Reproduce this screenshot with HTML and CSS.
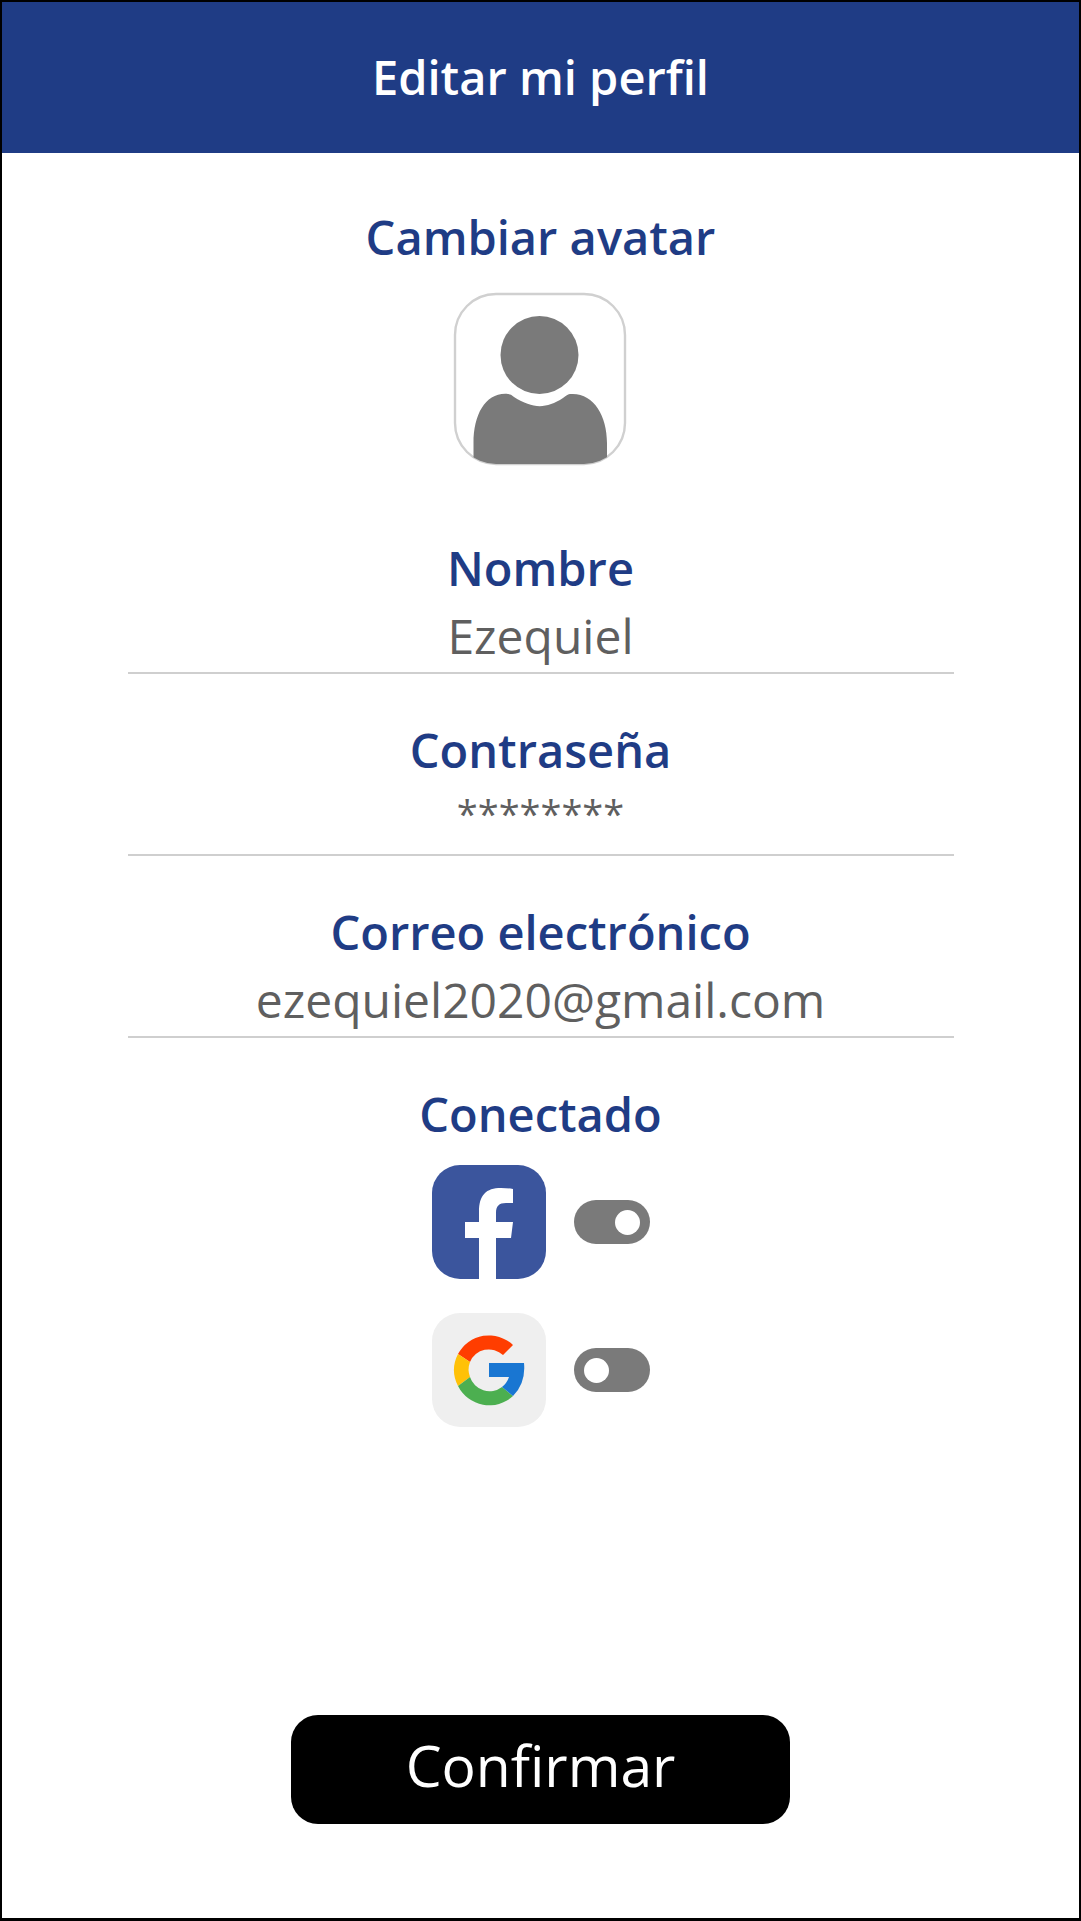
FILE: index.html
```html
<!DOCTYPE html>
<html lang="es">
<head>
<meta charset="utf-8">
<meta name="viewport" content="width=device-width, initial-scale=1">
<title>Editar mi perfil</title>
<link rel="stylesheet" href="styles.css">
</head>
<body>
<div class="screen">
  <header class="topbar">
    <h1 class="topbar-title">Editar mi perfil</h1>
  </header>
  <form class="profile">
    <section class="avatar-section">
      <h2 class="heading" id="avatar-heading">Cambiar avatar</h2>
      <button class="avatar" type="button" aria-labelledby="avatar-heading">
        <svg class="avatar-art" viewBox="0 0 172 172" aria-hidden="true">
          <defs><clipPath id="frame"><rect width="172" height="171" rx="42"/></clipPath></defs>
          <rect x="1" y="1" width="170" height="170" rx="41" fill="#fff" stroke="#d0d0d0" stroke-width="2.4"/>
          <g fill="#7a7a7a" clip-path="url(#frame)">
            <circle cx="85.500" cy="62" r="39"/>
            <path d="M19.500 172V150C19.500 121 32 99 54 101Q57 101 60 104C79 116 92 116 109 105Q114 101 116 101C139 99 153 122 153 150V172Z"/>
          </g>
        </svg>
      </button>
    </section>
    <div class="field">
      <label class="heading" for="name">Nombre</label>
      <input class="field-input" id="name" type="text" value="Ezequiel">
    </div>
    <div class="field">
      <label class="heading" for="password">Contraseña</label>
      <input class="field-input field-masked" id="password" type="text" value="********">
    </div>
    <div class="field">
      <label class="heading" for="email">Correo electrónico</label>
      <input class="field-input" id="email" type="email" value="ezequiel2020@gmail.com">
    </div>
    <section class="accounts">
      <h2 class="heading">Conectado</h2>
      <label class="account">
        <svg class="account-logo" viewBox="0 0 114 114" role="img" aria-label="Facebook">
          <rect width="114" height="114" rx="28" fill="#3b559d"/>
          <path fill="#fff" d="M47 114V73H33V57H47V47C47 30 54 23 69 23Q76 23 81 24V38H74C67 38 64 41 64 48V57H81L79 73H64V114Z"/>
        </svg>
        <input class="toggle" type="checkbox" role="switch" checked>
      </label>
      <label class="account">
        <svg class="account-logo" viewBox="0 0 114 114" role="img" aria-label="Google">
          <rect width="114" height="114" rx="28" fill="#efefef"/>
          <path fill="#ff3d00" d="M26 41A35 35 0 0 1 81 32L71 42A20.500 20.500 0 0 0 38 49Z"/>
          <path fill="#ffc107" d="M26 41A35 35 0 0 0 26 73L38 64A21 21 0 0 1 38 49Z"/>
          <path fill="#4caf50" d="M26 73A35 35 0 0 0 81 83L70 74A20.500 20.500 0 0 1 38 64Z"/>
          <path fill="#1976d2" d="M57 50H92Q94 70 81 83L70 74Q75 70 77 64H57Z"/>
        </svg>
        <input class="toggle" type="checkbox" role="switch">
      </label>
    </section>
    <button class="confirm" type="submit">Confirmar</button>
  </form>
</div>
</body>
</html>
```
FILE: styles.css
```css
* {
  box-sizing: border-box;
}

body {
  margin: 0;
  background: #fff;
  font-family: "Open Sans", "Noto Sans", sans-serif;
  font-size: 48px;
  font-variant-ligatures: none;
  line-height: 70px;
}

.screen {
  display: flex;
  flex-direction: column;
  min-height: 100vh;
  border: 2px solid #000;
  border-bottom-width: 3px;
}

.topbar {
  padding: 40px 24px 41px;
  background: #1f3c85;
  color: #fff;
  text-align: center;
}

.topbar-title,
.heading {
  display: block;
  margin: 0;
  font-size: 47px;
  font-weight: 600;
  line-height: 70px;
}

.heading {
  color: #1f3c85;
}

.profile {
  display: flex;
  flex: 1;
  flex-direction: column;
  align-items: center;
  gap: 41px;
  padding: 49px 24px 94px;
  text-align: center;
}

.avatar-section {
  display: flex;
  flex-direction: column;
  align-items: center;
  gap: 21px;
  margin-bottom: 27px;
}

.avatar {
  width: 172px;
  height: 172px;
  padding: 0;
  border: 0;
  background: none;
  cursor: pointer;
}

.avatar-art {
  display: block;
  overflow: visible;
}

.field {
  width: 100%;
  max-width: 826px;
}

.field-input {
  display: block;
  width: 100%;
  height: 71px;
  padding: 0 0 4px;
  border: 0;
  border-bottom: 2px solid #cfcfcf;
  background: none;
  color: #5f5f5f;
  font: inherit;
  text-align: center;
}

.field-masked {
  padding-bottom: 14px;
  font-size: 38px;
}

.accounts {
  display: flex;
  flex-direction: column;
  align-items: center;
}

.account {
  display: flex;
  align-items: center;
  gap: 28px;
  margin-top: 34px;
}

.heading + .account {
  margin-top: 16px;
}

.account-logo {
  width: 114px;
  height: 114px;
}

.toggle {
  display: flex;
  align-items: center;
  width: 76px;
  height: 44px;
  margin: 0;
  padding: 0 10px;
  border-radius: 22px;
  background: #7a7a7a;
  appearance: none;
  cursor: pointer;
}

.toggle::before {
  width: 25px;
  height: 25px;
  border-radius: 50%;
  background: #fff;
  content: "";
}

.toggle:checked {
  justify-content: flex-end;
}

.confirm {
  width: 100%;
  max-width: 499px;
  margin-top: auto;
  padding: 9px 24px 18px;
  border: 0;
  border-radius: 27px;
  background: #000;
  color: #fff;
  font: inherit;
  font-size: 57px;
  font-variant-ligatures: none;
  line-height: 82px;
  cursor: pointer;
}
```
